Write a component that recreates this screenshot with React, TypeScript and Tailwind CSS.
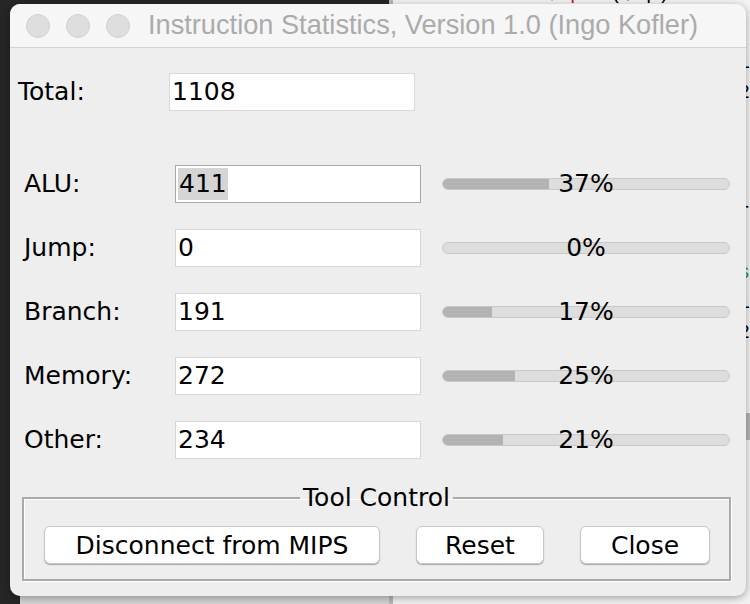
const rows = [
  { label: 'ALU:', value: '411', pct: 37, selected: true },
  { label: 'Jump:', value: '0', pct: 0 },
  { label: 'Branch:', value: '191', pct: 17 },
  { label: 'Memory:', value: '272', pct: 25 },
  { label: 'Other:', value: '234', pct: 21 },
];

const font = { fontFamily: '"DejaVu Sans", sans-serif' };

const Bar = ({ pct }: { pct: number }) => (
  <div className="grid w-[288px] items-center">
    <div className="col-start-1 row-start-1 h-[12px] overflow-hidden rounded-full border border-[#c9c9c9] bg-[#dddddd]">
      <div className="h-full bg-[#b3b3b3]" style={{ width: `${pct}%` }} />
    </div>
    <span className="col-start-1 row-start-1 text-center text-[25px] leading-[30px] text-black">
      {pct}%
    </span>
  </div>
);

const Field = ({ value, selected }: { value: string; selected?: boolean }) => (
  <div
    className={`flex h-[38px] w-[246px] items-center bg-white pl-[2px] text-[25px] text-black ${
      selected ? 'border border-[#a9a9a9]' : 'border border-[#d6d6d6]'
    }`}
  >
    <span className={selected ? 'bg-[#d5d5d5] px-[1px] leading-[32px]' : 'leading-[32px]'}>
      {value}
    </span>
  </div>
);

const Btn = ({ children, w }: { children: string; w: string }) => (
  <button
    className={`${w} h-[38px] rounded-[6px] border border-[#c8c8c8] bg-white text-[25px] text-black shadow-[0_1px_1px_rgba(0,0,0,0.3)]`}
  >
    {children}
  </button>
);

export default function App() {
  return (
    <div className="relative h-[604px] w-[750px] overflow-hidden" style={font}>
      {/* desktop behind the window */}
      <div className="absolute inset-0 flex">
        <div className="flex w-[395px] flex-col bg-[#262626]">
          <div className="flex-1" />
          <div className="ml-[20px] h-[8px] bg-[#d6d6d6]" />
        </div>
        <div className="w-[4px] bg-[#b9b9b9]" />
        <div className="flex flex-1 flex-col bg-[#f3f3f3] font-mono text-[20px] leading-[22px]">
          <div className="-mt-[17px] ml-[51px] flex text-black">
            <span>76</span>
            <span className="ml-[39px] text-[#1a2bd6]">lw</span>
            <span className="ml-[15px] text-[#d61a1a]">$sp</span>
            <span className="ml-[28px]">($sp)</span>
          </div>
          <div className="ml-[345px] flex flex-col leading-[30px]">
            <div className="mt-[43px] text-black">1</div>
            <div className="text-black">2</div>
            <div className="mt-[89px] text-black">r</div>
            <div className="mt-[31px] text-[#17a32a]">s</div>
            <div className="text-black">1</div>
            <div className="text-black">2</div>
            <div className="mt-[65px] h-[27px] bg-[#b5b5b5]" />
          </div>
        </div>
      </div>

      {/* window */}
      <div className="absolute left-[10px] top-[4px] flex h-[592px] w-[736px] flex-col overflow-hidden rounded-[10px] bg-[#eeeeee] shadow-[0_2px_8px_rgba(0,0,0,0.35)]">
        <div className="flex h-[44px] shrink-0 items-center border-b border-[#d3d3d3] bg-[#f6f6f6] pl-[16px]">
          <div className="flex gap-[16px]">
            <div className="size-[24px] rounded-full border border-[#d0d0d0] bg-[#dedede]" />
            <div className="size-[24px] rounded-full border border-[#d0d0d0] bg-[#dedede]" />
            <div className="size-[24px] rounded-full border border-[#d0d0d0] bg-[#dedede]" />
          </div>
          <span
            className="ml-[18px] text-[27.2px] text-[#ababab]"
            style={{ fontFamily: '"Liberation Sans", sans-serif' }}
          >
            Instruction Statistics, Version 1.0 (Ingo Kofler)
          </span>
        </div>

        <div className="mt-[25px] flex items-center pl-[8px]">
          <span className="w-[151px] text-[25px] text-black">Total:</span>
          <div className="flex h-[38px] w-[246px] items-center border border-[#dadada] bg-white pl-[2px] text-[25px] text-black">
            1108
          </div>
        </div>

        <div className="mt-[54px] flex flex-col gap-[26px]">
          {rows.map((r) => (
            <div key={r.label} className="flex items-center pl-[14px]">
              <span className="w-[151px] text-[25px] text-black">{r.label}</span>
              <Field value={r.value} selected={r.selected} />
              <div className="ml-[21px]">
                <Bar pct={r.pct} />
              </div>
            </div>
          ))}
        </div>

        <fieldset className="ml-[12px] mt-[24px] w-[709px] border-2 border-[#aaaaaa] shadow-[inset_1px_1px_0_#fff,1px_1px_0_#fff]">
          <legend className="mx-auto px-[3px] text-[25px] leading-[30px] text-black">Tool Control</legend>
          <div className="flex justify-between pb-[15px] pl-[20px] pr-[19px] pt-[13px]">
            <Btn w="w-[336px]">Disconnect from MIPS</Btn>
            <Btn w="w-[128px]">Reset</Btn>
            <Btn w="w-[130px]">Close</Btn>
          </div>
        </fieldset>
      </div>
    </div>
  );
}
